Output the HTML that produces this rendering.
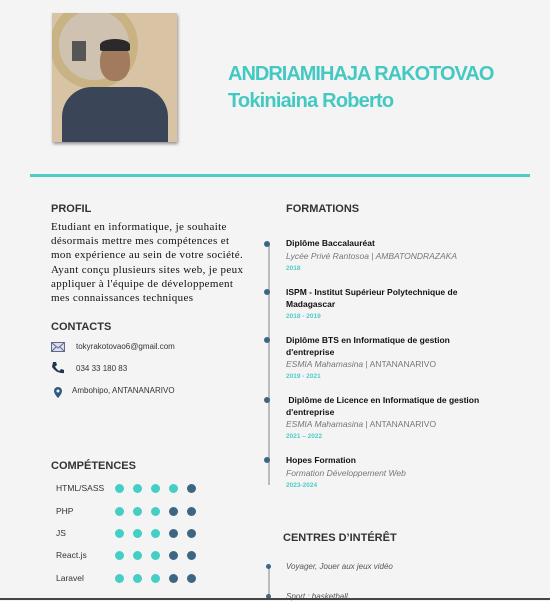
<!DOCTYPE html>
<html><head><meta charset="utf-8"><style>
body{margin:0;width:550px;height:600px;background:#f4f4f4;position:relative;overflow:hidden;font-family:"Liberation Sans",sans-serif;color:#222}
.a{position:absolute;white-space:nowrap}
.h{font-weight:bold;font-size:11px;color:#333}
.t{font-weight:bold;font-size:8.5px;color:#111}
.s{font-style:italic;font-size:8.5px;color:#777}
.y{font-size:6.5px;color:#4ecdc4;font-weight:bold}
.dot{position:absolute;width:6px;height:6px;border-radius:50%;background:#3d6584}
.sk{position:absolute;width:9px;height:9px;border-radius:50%}
.c{background:#44cec6}.d{background:#3d6584}
.lab{font-size:8.5px;color:#333}
</style></head><body>
<div class="a" style="left:52px;top:13px;width:125px;height:129px;background:#d8c3a5;box-shadow:1px 2px 3px rgba(0,0,0,.4);overflow:hidden">
 <div style="position:absolute;left:-2px;top:-12px;width:88px;height:88px;border-radius:50%;border:9px solid #c9b283;box-sizing:border-box;background:#cfc2b0"></div>
 <div style="position:absolute;left:20px;top:28px;width:14px;height:20px;background:#555"></div>
 <div style="position:absolute;left:48px;top:30px;width:30px;height:38px;border-radius:45%;background:#a27a5e"></div>
 <div style="position:absolute;left:48px;top:26px;width:30px;height:12px;border-radius:50% 50% 10% 10%;background:#2a2a2a"></div>
 <div style="position:absolute;left:10px;top:74px;width:106px;height:70px;border-radius:30px 30px 0 0;background:#3a4658"></div>
</div>
<div class="a" style="left:228px;top:63px;font-size:20px;font-weight:bold;color:#44c8c2;letter-spacing:-1px">ANDRIAMIHAJA RAKOTOVAO</div>
<div class="a" style="left:228px;top:90px;font-size:20px;font-weight:bold;color:#44c8c2;letter-spacing:-0.8px">Tokiniaina Roberto</div>
<div class="a" style="left:30px;top:174px;width:500px;height:3px;background:#4ecdc4"></div>

<div class="a h" style="left:51px;top:203px">PROFIL</div>
<div class="a" style="left:51px;top:220px;font-family:'Liberation Serif',serif;font-size:11px;letter-spacing:0.35px;line-height:14.2px;color:#111">Etudiant en informatique, je souhaite<br>désormais mettre mes compétences et<br>mon expérience au sein de votre société.<br>Ayant conçu plusieurs sites web, je peux<br>appliquer à l'équipe de développement<br>mes connaissances techniques</div>

<div class="a h" style="left:51px;top:321px">CONTACTS</div>
<svg class="a" style="left:51px;top:342px" width="14" height="10"><rect x=".5" y=".5" width="13" height="9" fill="#dde" stroke="#5a6a88"/><path d="M.5 .5L7 6 13.5 .5M.5 9.5L5 5M13.5 9.5L9 5" stroke="#5a6a88" fill="none"/></svg>
<div class="a lab" style="left:76px;top:342px;font-size:8px">tokyrakotovao6@gmail.com</div>
<svg class="a" style="left:51px;top:361px" width="13" height="13"><path d="M2 1L5 1 6 4 4 5.5Q6 9 8.5 10L10 8 13 9 13 12Q6 13 1 6Z" fill="#1f3550"/></svg>
<div class="a lab" style="left:76px;top:364px;font-size:8px">034 33 180 83</div>
<svg class="a" style="left:54px;top:387px" width="8" height="11"><path d="M4 0A4 4 0 0 0 0 4C0 7 4 11 4 11S8 7 8 4A4 4 0 0 0 4 0Z" fill="#2d5a80"/><circle cx="4" cy="4" r="1.5" fill="#f4f4f4"/></svg>
<div class="a lab" style="left:72px;top:386px;font-size:8px">Ambohipo, ANTANANARIVO</div>

<div class="a h" style="left:51px;top:460px">COMPÉTENCES</div>
<div class="a lab" style="left:56px;top:483px">HTML/SASS</div>
<div class="a lab" style="left:56px;top:506px">PHP</div>
<div class="a lab" style="left:56px;top:528px">JS</div>
<div class="a lab" style="left:56px;top:550px">React.js</div>
<div class="a lab" style="left:56px;top:573px">Laravel</div>

<div class="a h" style="left:286px;top:203px">FORMATIONS</div>
<div class="a" style="left:268px;top:244px;width:1.5px;height:241px;background:#bbb"></div>
<div class="dot" style="left:264px;top:241px"></div>
<div class="dot" style="left:264px;top:289px"></div>
<div class="dot" style="left:264px;top:337px"></div>
<div class="dot" style="left:264px;top:397px"></div>
<div class="dot" style="left:264px;top:457px"></div>
<div class="a t" style="left:286px;top:238px">Diplôme Baccalauréat</div>
<div class="a s" style="left:286px;top:251px">Lycée Privé Rantosoa | AMBATONDRAZAKA</div>
<div class="a y" style="left:286px;top:265px">2018</div>
<div class="a t" style="left:286px;top:287px">ISPM - Institut Supérieur Polytechnique de</div>
<div class="a t" style="left:286px;top:299px">Madagascar</div>
<div class="a y" style="left:286px;top:313px">2018 - 2019</div>
<div class="a t" style="left:286px;top:335px">Diplôme BTS en Informatique de gestion</div>
<div class="a t" style="left:286px;top:347px">d'entreprise</div>
<div class="a s" style="left:286px;top:359px">ESMIA Mahamasina <span style="font-style:normal">| ANTANANARIVO</span></div>
<div class="a y" style="left:286px;top:373px">2019 - 2021</div>
<div class="a t" style="left:286px;top:395px">&nbsp;Diplôme de Licence en Informatique de gestion</div>
<div class="a t" style="left:286px;top:407px">d'entreprise</div>
<div class="a s" style="left:286px;top:419px">ESMIA Mahamasina <span style="font-style:normal">| ANTANANARIVO</span></div>
<div class="a y" style="left:286px;top:433px">2021 – 2022</div>
<div class="a t" style="left:286px;top:455px">Hopes Formation</div>
<div class="a s" style="left:286px;top:468px">Formation Développement Web</div>
<div class="a y" style="left:286px;top:482px">2023-2024</div>

<div class="a h" style="left:283px;top:532px">CENTRES D’INTÉRÊT</div>
<div class="a" style="left:268px;top:567px;width:1.5px;height:33px;background:#bbb"></div>
<div class="dot" style="left:266px;top:564px;width:5px;height:5px"></div>
<div class="dot" style="left:266px;top:594px;width:5px;height:5px"></div>
<div class="a s" style="left:286px;top:562px;font-size:8px;color:#555">Voyager, Jouer aux jeux vidéo</div>
<div class="a s" style="left:286px;top:592px;font-size:8px;color:#555">Sport : basketball</div>
<div class="a" style="left:0;top:598px;width:550px;height:2px;background:#444"></div>

<div class="sk c" style="left:115px;top:484px"></div><div class="sk c" style="left:133px;top:484px"></div><div class="sk c" style="left:151px;top:484px"></div><div class="sk c" style="left:169px;top:484px"></div><div class="sk d" style="left:187px;top:484px"></div>
<div class="sk c" style="left:115px;top:507px"></div><div class="sk c" style="left:133px;top:507px"></div><div class="sk c" style="left:151px;top:507px"></div><div class="sk d" style="left:169px;top:507px"></div><div class="sk d" style="left:187px;top:507px"></div>
<div class="sk c" style="left:115px;top:529px"></div><div class="sk c" style="left:133px;top:529px"></div><div class="sk c" style="left:151px;top:529px"></div><div class="sk d" style="left:169px;top:529px"></div><div class="sk d" style="left:187px;top:529px"></div>
<div class="sk c" style="left:115px;top:551px"></div><div class="sk c" style="left:133px;top:551px"></div><div class="sk c" style="left:151px;top:551px"></div><div class="sk d" style="left:169px;top:551px"></div><div class="sk d" style="left:187px;top:551px"></div>
<div class="sk c" style="left:115px;top:574px"></div><div class="sk c" style="left:133px;top:574px"></div><div class="sk c" style="left:151px;top:574px"></div><div class="sk d" style="left:169px;top:574px"></div><div class="sk d" style="left:187px;top:574px"></div>
</body></html>
